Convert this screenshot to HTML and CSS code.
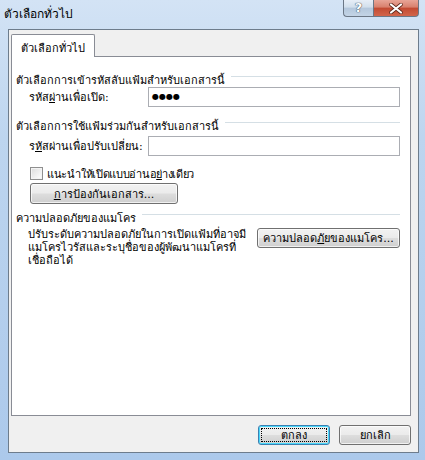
FILE: index.html
```
<!DOCTYPE html>
<html lang="th">
<head>
    <meta charset="UTF-8">
    <title>ตัวเลือกทั่วไป</title>
    <link rel="stylesheet" href="styles.css">
</head>
<body>
    <div class="window">
        <div class="titlebar">
            <div class="title">ตัวเลือกทั่วไป</div>
            <div class="caption-buttons">
                <div class="cap help">?</div>
                <div class="cap close">
                    <svg width="14" height="11" viewBox="0 0 14 11">
                        <path d="M2 1.5 L12 9.5 M12 1.5 L2 9.5" stroke="#5a2418" stroke-width="3.6" stroke-linecap="round"/>
                        <path d="M2 1.5 L12 9.5 M12 1.5 L2 9.5" stroke="#fff" stroke-width="2.2" stroke-linecap="round"/>
                    </svg>
                </div>
            </div>
        </div>

        <div class="client">
            <div class="tabs">
                <div class="tab active">ตัวเลือกทั่วไป</div>
            </div>
            <div class="panel">
                <div class="group-title"><span>ตัวเลือกการเข้ารหัสลับแฟ้มสำหรับเอกสารนี้</span></div>
                <div class="field-row first">
                    <label class="field-label">รหัส<u>ผ่</u>านเพื่อเปิด:</label>
                    <div class="textbox"><span class="dots">●●●●</span></div>
                </div>

                <div class="group-title second"><span>ตัวเลือกการใช้แฟ้มร่วมกันสำหรับเอกสารนี้</span></div>
                <div class="field-row">
                    <label class="field-label">ร<u>หั</u>สผ่านเพื่อปรับเปลี่ยน:</label>
                    <div class="textbox"></div>
                </div>
                <div class="check-row">
                    <span class="checkbox"></span>
                    <span class="check-label">แนะนำให้เปิดแบบอ่านอ<u>ย่</u>างเดียว</span>
                </div>
                <div class="btn protect"><span class="btn-text"><u>ก</u>ารป้องกันเอกสาร...</span></div>

                <div class="group-title third"><span>ความปลอดภัยของแมโคร</span></div>
                <div class="macro-row">
                    <p class="macro-text">ปรับระดับความปลอดภัยในการเปิดแฟ้มที่อาจมี<br>แมโครไวรัสและระบุชื่อของผู้พัฒนาแมโครที่<br>เชื่อถือได้</p>
                    <div class="btn macro"><span class="btn-text">ความปลอด<u>ภั</u>ยของแมโคร...</span></div>
                </div>
            </div>
            <div class="footer">
                <div class="btn default"><span class="focus"><span class="btn-text">ตกลง</span></span></div>
                <div class="btn cancel"><span class="btn-text">ยกเลิก</span></div>
            </div>
        </div>
    </div>
</body>
</html>
```

FILE: styles.css
```
body {
    margin: 0;
    font-family: Tahoma, "DejaVu Sans", sans-serif;
    font-size: 11px;
    line-height: 14px;
    color: #000;
}
.window {
    width: 425px;
    height: 460px;
    box-sizing: border-box;
    display: flex;
    flex-direction: column;
    background: linear-gradient(180deg, #d3e3f5 0%, #bdd5ef 30%, #acc9eb 100%);
}
.titlebar {
    height: 29px;
    display: flex;
    justify-content: space-between;
    align-items: flex-start;
    padding: 0 6px 0 4px;
}
.title {
    font-size: 12px;
    padding-top: 7px;
    line-height: 14px;
}
.caption-buttons {
    display: flex;
}
.cap {
    height: 17px;
    box-sizing: border-box;
    border: 1px solid #6b7786;
    border-top: none;
    display: flex;
    align-items: center;
    justify-content: center;
}
.help {
    width: 30px;
    border-right: none;
    border-radius: 0 0 0 4px;
    background: linear-gradient(180deg, #e7eef7 0%, #d2dfec 45%, #b4c7dc 50%, #c3d4e6 100%);
    color: #fff;
    font-family: "DejaVu Sans", sans-serif;
    font-weight: bold;
    font-size: 13px;
    text-shadow: 0 0 1px #2d3a4b, 0 0 1px #2d3a4b;
}
.close {
    width: 46px;
    border-radius: 0 0 4px 0;
    background: linear-gradient(180deg, #e8a597 0%, #d8806d 45%, #c24a32 50%, #d2654b 100%);
}
.client {
    flex: 1;
    margin: 0 6px 7px 8px;
    background: #f0f0f0;
    border: 1px solid #6d7c8c;
    padding: 4px 7px 0 2px;
    display: flex;
    flex-direction: column;
}
.tabs {
    display: flex;
    height: 22px;
    position: relative;
    z-index: 1;
}
.tab {
    background: #fff;
    border: 1px solid #898c95;
    border-bottom: none;
    padding: 0 9px;
    line-height: 28px;
    height: 23px;
    box-sizing: border-box;
    border-radius: 2px 2px 0 0;
}
.panel {
    height: 360px;
    box-sizing: border-box;
    background: #fff;
    border: 1px solid #898c95;
    padding: 14px 10px 0 4px;
}
.group-title {
    display: flex;
    align-items: flex-start;
    height: 14px;
    white-space: nowrap;
}
.group-title span {
    padding-top: 3px;
}
.group-title::after {
    content: "";
    flex: 1;
    border-top: 1px solid #d5dfe5;
    margin: 5px 0 0 6px;
}
.group-title.second {
    margin-top: 10px;
}
.group-title.third {
    margin-top: 5px;
}
.field-row {
    display: flex;
    align-items: center;
    height: 20px;
    margin: 5px 0 0 13px;
}
.field-row.first {
    margin-top: 2px;
}
.field-label {
    width: 119px;
    padding-top: 2px;
}
.textbox {
    flex: 1;
    height: 20px;
    box-sizing: border-box;
    border: 1px solid #abadb3;
    background: #fff;
    display: flex;
    align-items: center;
    padding-left: 3px;
}
.dots {
    font-family: "DejaVu Sans", sans-serif;
    font-size: 8px;
}
.check-row {
    display: flex;
    align-items: center;
    height: 13px;
    margin: 11px 0 0 14px;
    gap: 4px;
}
.check-label {
    padding-top: 2px;
    letter-spacing: -0.3px;
}
.checkbox {
    width: 11px;
    height: 11px;
    border: 1px solid #8f8f8f;
    background: linear-gradient(135deg, #dcdcdc 0%, #f5f5f5 70%, #fff 100%);
    box-shadow: inset 0 0 0 1px #f4f4f4;
}
.btn {
    box-sizing: border-box;
    height: 21px;
    border: 1px solid #707070;
    border-radius: 3px;
    background: linear-gradient(180deg, #f2f2f2 0%, #ebebeb 48%, #dddddd 52%, #cfcfcf 100%);
    box-shadow: inset 0 0 0 1px rgba(255, 255, 255, 0.7);
    display: flex;
    align-items: center;
    justify-content: center;
}
.btn-text {
    padding-top: 2px;
}
.btn.protect {
    width: 148px;
    margin: 3px 0 0 14px;
}
.macro-row {
    display: flex;
    justify-content: space-between;
    align-items: flex-start;
    margin: 5px 0 0 12px;
}
.macro-text {
    margin: 0;
    line-height: 13px;
}
.btn.macro {
    width: 143px;
    height: 20px;
}
.footer {
    display: flex;
    justify-content: flex-end;
    gap: 9px;
    margin: 9px 0 0 0;
}
.footer .btn {
    width: 72px;
    height: 20px;
}
.btn.default {
    border-color: #3c7fb1;
    box-shadow: inset 0 0 0 1px #48d8fb;
    padding: 2px;
}
.focus {
    flex: 1;
    height: 100%;
    box-sizing: border-box;
    border: 1px dotted #000;
    display: flex;
    align-items: center;
    justify-content: center;
}
```
